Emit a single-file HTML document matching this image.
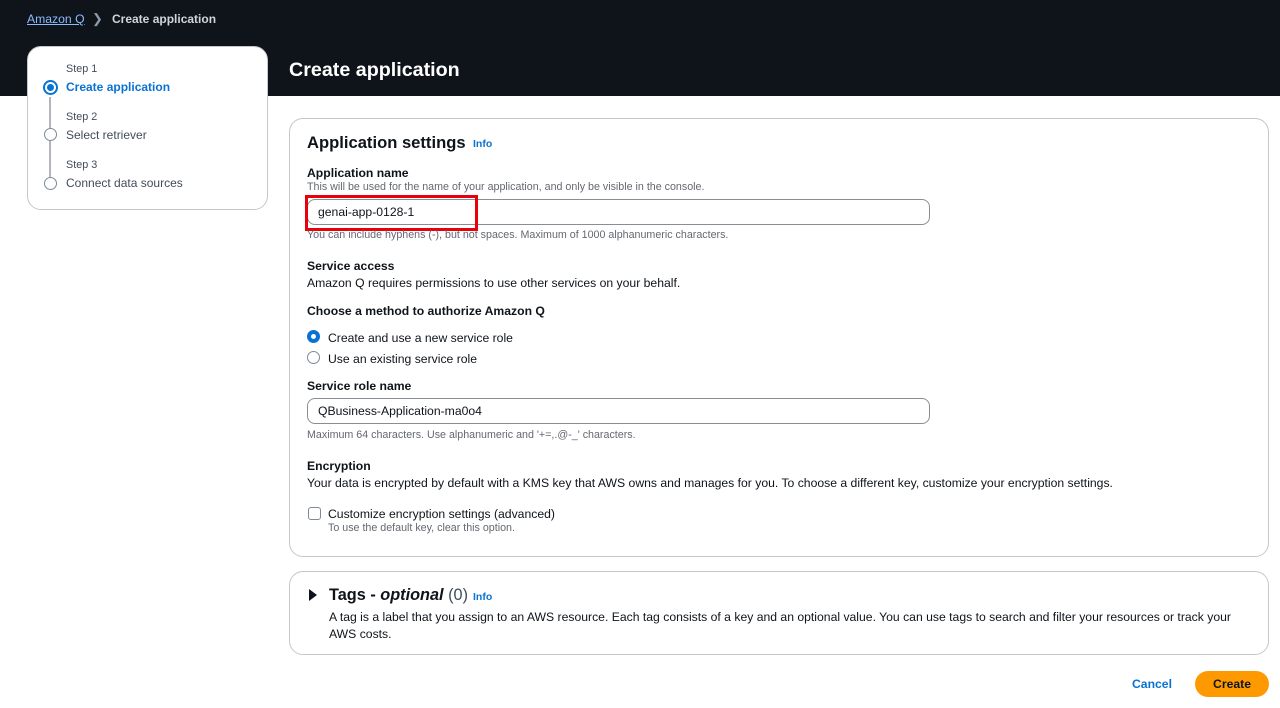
<!DOCTYPE html>
<html><head><style>
*{margin:0;padding:0;box-sizing:border-box}
body{width:1280px;height:708px;background:#fff;font-family:"Liberation Sans",sans-serif;color:#0f141a;position:relative;overflow:hidden}
.a{position:absolute;white-space:nowrap}
.hdr{position:absolute;left:0;top:0;width:1280px;height:96px;background:#0f141a}
.card{position:absolute;background:#fff;border:1px solid #c6c6cd;border-radius:14px}
.lbl{font-size:12.2px;font-weight:bold}
.desc{font-size:10.7px;color:#656871}
.txt{font-size:12.2px}
.inp{position:absolute;border:1px solid #8c8c94;border-radius:8px;height:26px;background:#fff;font-size:12.2px;padding:5px 10px}
.info{font-size:10.5px;font-weight:bold;color:#0972d3}
.rad{position:absolute;width:13px;height:13px;border-radius:50%;border:1.5px solid #7d8998;background:#fff}
</style></head><body>
<div class="hdr"></div>
<div class="a" style="left:27px;top:12px;font-size:12.2px;color:#89bdff;text-decoration:underline">Amazon Q</div>
<div class="a" style="left:92px;top:11px;font-size:13px;color:#8d99a8">&#x276F;</div>
<div class="a" style="left:112px;top:12px;font-size:12px;color:#d1d5db;font-weight:bold">Create application</div>
<div class="a" style="left:289px;top:59px;font-size:19.7px;font-weight:bold;color:#fff">Create application</div>

<div class="card" style="left:27px;top:46px;width:241px;height:164px"></div>
<div class="a" style="left:49px;top:97px;width:1.5px;height:31px;background:#b4b4bb"></div>
<div class="a" style="left:49px;top:141px;width:1.5px;height:36px;background:#b4b4bb"></div>
<div class="rad" style="left:43px;top:80px;width:15px;height:15px;border:2px solid #0972d3"></div>
<div class="a" style="left:47px;top:84px;width:7px;height:7px;border-radius:50%;background:#0972d3"></div>
<div class="rad" style="left:44px;top:128px"></div>
<div class="rad" style="left:44px;top:177px"></div>
<div class="a" style="left:66px;top:63px;font-size:10.8px;color:#414d5c">Step 1</div>
<div class="a" style="left:66px;top:80px;font-size:12px;color:#0972d3;font-weight:bold">Create application</div>
<div class="a" style="left:66px;top:111px;font-size:10.8px;color:#414d5c">Step 2</div>
<div class="a" style="left:66px;top:128px;font-size:12px;color:#414d5c">Select retriever</div>
<div class="a" style="left:66px;top:159px;font-size:10.8px;color:#414d5c">Step 3</div>
<div class="a" style="left:66px;top:176px;font-size:12px;color:#414d5c">Connect data sources</div>

<div class="card" style="left:289px;top:118px;width:980px;height:439px"></div>
<div class="a" style="left:307px;top:133px;font-size:16.6px;font-weight:bold">Application settings</div>
<div class="a info" style="left:473px;top:138px">Info</div>
<div class="a lbl" style="left:307px;top:166px">Application name</div>
<div class="a desc" style="left:307px;top:181px">This will be used for the name of your application, and only be visible in the console.</div>
<div class="inp" style="left:307px;top:199px;width:623px">genai-app-0128-1</div>
<div class="a" style="left:305px;top:195px;width:173px;height:36px;border:3px solid #e8000b"></div>
<div class="a desc" style="left:307px;top:229px">You can include hyphens (-), but not spaces. Maximum of 1000 alphanumeric characters.</div>
<div class="a lbl" style="left:307px;top:259px">Service access</div>
<div class="a txt" style="left:307px;top:276px">Amazon Q requires permissions to use other services on your behalf.</div>
<div class="a lbl" style="left:307px;top:304px">Choose a method to authorize Amazon Q</div>
<div class="rad" style="left:307px;top:330px;border:4px solid #0972d3"></div>
<div class="a txt" style="left:328px;top:331px">Create and use a new service role</div>
<div class="rad" style="left:307px;top:351px"></div>
<div class="a txt" style="left:328px;top:352px">Use an existing service role</div>
<div class="a lbl" style="left:307px;top:379px">Service role name</div>
<div class="inp" style="left:307px;top:398px;width:623px">QBusiness-Application-ma0o4</div>
<div class="a desc" style="left:307px;top:429px">Maximum 64 characters. Use alphanumeric and '+=,.@-_' characters.</div>
<div class="a lbl" style="left:307px;top:459px">Encryption</div>
<div class="a txt" style="left:307px;top:476px">Your data is encrypted by default with a KMS key that AWS owns and manages for you. To choose a different key, customize your encryption settings.</div>
<div class="a" style="left:308px;top:507px;width:13px;height:13px;border:1.5px solid #7d8998;border-radius:3px"></div>
<div class="a txt" style="left:328px;top:507px">Customize encryption settings (advanced)</div>
<div class="a desc" style="left:328px;top:522px">To use the default key, clear this option.</div>

<div class="card" style="left:289px;top:571px;width:980px;height:84px"></div>
<div class="a" style="left:309px;top:589px;width:0;height:0;border-left:8px solid #0f141a;border-top:6px solid transparent;border-bottom:6px solid transparent"></div>
<div class="a" style="left:329px;top:586px;font-size:16.3px"><b>Tags - <i>optional</i></b> <span style="color:#414d5c">(0)</span></div>
<div class="a info" style="left:473px;top:591px">Info</div>
<div class="a txt" style="left:329px;top:610px">A tag is a label that you assign to an AWS resource. Each tag consists of a key and an optional value. You can use tags to search and filter your resources or track your</div>
<div class="a txt" style="left:329px;top:627px">AWS costs.</div>

<div class="a" style="left:1132px;top:677px;font-size:12.2px;font-weight:bold;color:#0972d3">Cancel</div>
<div class="a" style="left:1195px;top:671px;width:74px;height:26px;border-radius:14px;background:#ff9900;font-size:12.2px;font-weight:bold;text-align:center;line-height:26px">Create</div>
</body></html>
